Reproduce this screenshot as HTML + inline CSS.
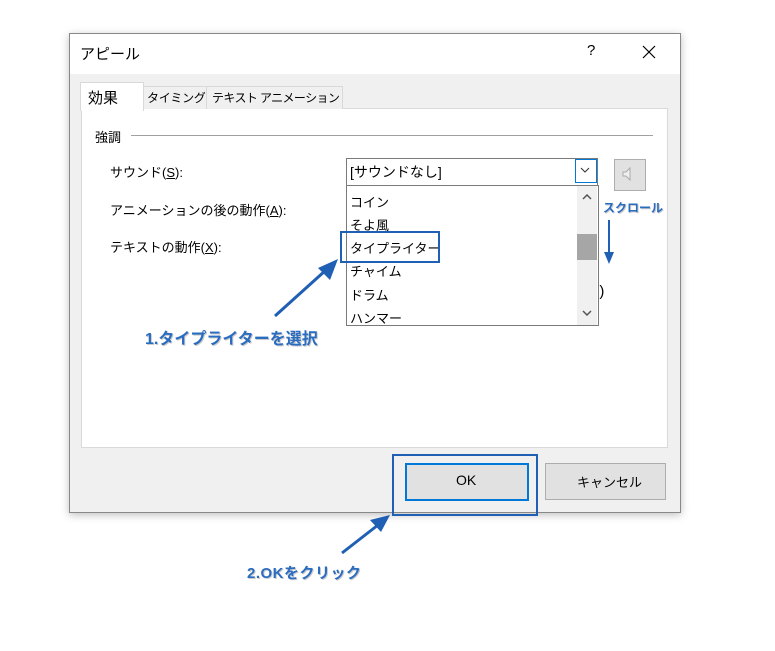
<!DOCTYPE html><html><head><style>
body{margin:0;width:775px;height:651px;background:#fff;position:relative;font-family:"Liberation Sans","Noto Sans CJK JP",sans-serif;overflow:hidden}
.a{position:absolute}
.t{font-size:13px;color:#000;white-space:nowrap}
.it{position:absolute;left:3px;font-size:13px}
</style></head><body>
<div class="a" style="left:69px;top:33px;width:610px;height:478px;background:#f0f0f0;border:1px solid #888;box-shadow:0 2px 8px rgba(0,0,0,.25)"></div>
<div class="a" style="left:70px;top:34px;width:610px;height:40px;background:#fff"></div>
<div class="a t" style="left:80px;top:43px;font-size:15px">アピール</div>
<div class="a t" style="left:587px;top:42px;font-size:15px">?</div>
<svg class="a" style="left:642px;top:45px" width="14" height="14"><path d="M1 1L13 13M13 1L1 13" stroke="#000" stroke-width="1.2"/></svg>
<div class="a" style="left:81px;top:108px;width:585px;height:338px;background:#fff;border:1px solid #d9d9d9"></div>
<div class="a" style="left:80px;top:82px;width:62px;height:28px;background:#fff;border:1px solid #d9d9d9;border-bottom:none"></div>
<div class="a t" style="left:88px;top:87px;font-size:15px">効果</div>
<div class="a" style="left:143px;top:86px;width:63px;height:22px;background:#f0f0f0;border:1px solid #d9d9d9;border-bottom:none"></div>
<div class="a t" style="left:147px;top:89px;font-size:12px;letter-spacing:-0.3px">タイミング</div>
<div class="a" style="left:206px;top:86px;width:135px;height:22px;background:#f0f0f0;border:1px solid #d9d9d9;border-bottom:none"></div>
<div class="a t" style="left:212px;top:89px;font-size:12px;letter-spacing:-0.6px">テキスト アニメーション</div>
<div class="a t" style="left:95px;top:127px">強調</div>
<div class="a" style="left:131px;top:135px;width:522px;height:1px;background:#a0a0a0"></div>
<div class="a t" style="left:110px;top:162px">サウンド(<u>S</u>):</div>
<div class="a t" style="left:110px;top:200px">アニメーションの後の動作(<u>A</u>):</div>
<div class="a t" style="left:110px;top:237px">テキストの動作(<u>X</u>):</div>
<div class="a t" style="left:591px;top:283px;font-size:15px">2)</div>
<div class="a" style="left:346px;top:158px;width:250px;height:26px;background:#fff;border:1px solid #7a7a7a"></div>
<div class="a t" style="left:350px;top:162px;font-size:14px">[サウンドなし]</div>
<div class="a" style="left:575px;top:159px;width:20px;height:22px;border:1px solid #0078d7;background:#fff"></div>
<svg class="a" style="left:580px;top:167px" width="10" height="6"><path d="M1 1L5 5L9 1" stroke="#333" fill="none"/></svg>
<div class="a" style="left:614px;top:159px;width:30px;height:30px;background:#e1e1e1;border:1px solid #adadad"></div>
<svg class="a" style="left:620px;top:164px" width="20" height="20"><path d="M3 8h3l4-4v12l-4-4H3z" fill="#f0f0f0" stroke="#aaa"/></svg>
<div class="a" style="left:346px;top:185px;width:251px;height:139px;background:#fff;border:1px solid #7a7a7a">
<div class="it" style="top:6px">コイン</div>
<div class="it" style="top:29px">そよ風</div>
<div class="it" style="top:52px">タイプライター</div>
<div class="it" style="top:75px">チャイム</div>
<div class="it" style="top:99px">ドラム</div>
<div class="it" style="top:122px">ハンマー</div>
<div class="a" style="left:230px;top:0;width:20px;height:139px;background:#f0f0f0"></div>
<div class="a" style="left:230px;top:48px;width:20px;height:26px;background:#a6a6a6"></div>
<svg class="a" style="left:235px;top:8px" width="10" height="6"><path d="M1 5L5 1L9 5" stroke="#555" stroke-width="1.5" fill="none"/></svg>
<svg class="a" style="left:235px;top:124px" width="10" height="6"><path d="M1 1L5 5L9 1" stroke="#555" stroke-width="1.5" fill="none"/></svg>
</div>
<div class="a" style="left:340px;top:231px;width:96px;height:28px;border:2px solid #1f5fb4"></div>
<div class="a" style="left:392px;top:454px;width:142px;height:58px;border:2px solid #1f5fb4"></div>
<div class="a" style="left:405px;top:463px;width:120px;height:34px;background:#e1e1e1;border:2px solid #0078d7"></div>
<div class="a t" style="left:456px;top:472px;font-size:14px">OK</div>
<div class="a" style="left:545px;top:463px;width:119px;height:35px;background:#e1e1e1;border:1px solid #adadad"></div>
<div class="a t" style="left:577px;top:472px">キャンセル</div>
<svg class="a" style="left:0;top:0" width="775" height="651">
<path d="M275 316L326 270" stroke="#1f5fb4" stroke-width="3"/><path d="M338 259L318 268L330 280Z" fill="#1f5fb4"/>
<path d="M342 553L378 525" stroke="#1f5fb4" stroke-width="3"/><path d="M390 515L370 520L381 532Z" fill="#1f5fb4"/>
<path d="M609 220V255" stroke="#1f5fb4" stroke-width="2"/><path d="M604 252L609 264L614 252Z" fill="#1f5fb4"/>
</svg>
<div class="a" style="left:145px;top:325px;font-size:16px;font-weight:bold;color:#2a6cc0;text-shadow:1px 1px 0 #ccc;white-space:nowrap">1.タイプライターを選択</div>
<div class="a" style="left:247px;top:562px;font-size:15px;font-weight:bold;color:#2a6cc0;text-shadow:1px 1px 0 #ccc;white-space:nowrap;letter-spacing:0.5px">2.OKをクリック</div>
<div class="a" style="left:603px;top:199px;font-size:12px;font-weight:bold;color:#2a6cc0;text-shadow:1px 1px 0 #ccc">スクロール</div>
</body></html>
